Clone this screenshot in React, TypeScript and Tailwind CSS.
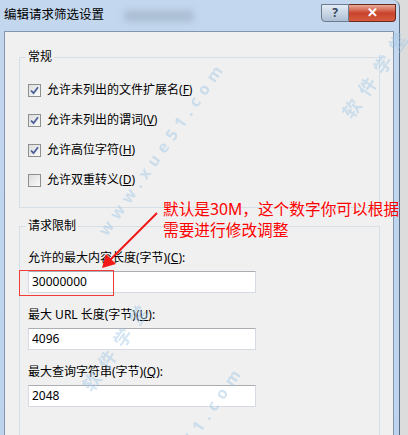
import React from "react";

const cjk = { fontFamily: '"Noto Sans", "Noto Sans CJK SC", sans-serif' };

const Check = ({ on }: { on: boolean }) => (
  <span className="flex h-[13px] w-[13px] items-center justify-center border border-[#8e8f8f] bg-gradient-to-br from-[#dcdcdc] to-[#fbfbfb]">
    {on && (
      <svg width="9" height="9" viewBox="0 0 9 9">
        <path d="M1 4.5 L3.5 7.2 L8 1.2" fill="none" stroke="#4a5f97" strokeWidth="1.8" />
      </svg>
    )}
  </span>
);

const Row = ({ on, text, k }: { on: boolean; text: string; k: string }) => (
  <div className="flex h-[30px] items-center gap-[6px]">
    <Check on={on} />
    <span className="text-[12px] text-black">
      {text}(<span className="underline">{k}</span>)
    </span>
  </div>
);

const Field = ({ label, k, value }: { label: string; k: string; value: string }) => (
  <div className="flex flex-col">
    <span className="h-[16px] text-[12px] leading-[16px] text-black">
      {label}(<span className="underline">{k}</span>):
    </span>
    <div className="mt-[5px] flex h-[22px] w-[228px] items-center border border-[#d6dbe3] border-t-[#abadb3] bg-white pl-[3px] text-[12px] text-black">
      {value}
    </div>
  </div>
);

// faint diagonal site watermark, centred on (x, y)
const Mark = ({ x, y, text, cls }: { x: number; y: number; text: string; cls: string }) => (
  <div className="pointer-events-none absolute" style={{ left: x, top: y }}>
    <div className={`-translate-x-1/2 -translate-y-1/2 -rotate-[55deg] whitespace-nowrap font-bold text-[#9fc6e6] opacity-45 ${cls}`}>
      {text}
    </div>
  </div>
);

export default function App() {
  return (
    <div className="relative h-[435px] w-[408px] overflow-hidden bg-[#dcdcdc]" style={cjk}>
      <div className="flex h-full w-[400px] flex-col rounded-tr-[7px] border-r border-[#5a6b80] bg-gradient-to-b from-[#c3d7ee] to-[#bcd4ee]">
        {/* title bar */}
        <div className="relative flex h-[31px] shrink-0 items-center pl-[4px]">
          <span className="text-[12.5px] text-black">编辑请求筛选设置</span>
          <div className="ml-[20px] h-[12px] w-[70px] rounded bg-[#8a9bb0] opacity-40 blur-[3px]" />
          <div className="absolute right-[3px] top-[4px] flex">
            <div className="flex h-[18px] w-[28px] items-center justify-center rounded-bl-[4px] border border-[#6d7b8e] bg-gradient-to-b from-[#e4ecf5] to-[#aebfd4] text-[12px] font-bold text-[#33465e]">
              ?
            </div>
            <div className="flex h-[18px] w-[47px] items-center justify-center rounded-br-[4px] border border-l-0 border-[#6b2a1f] bg-gradient-to-b from-[#e9a99a] via-[#c8432b] to-[#d55a3e] text-[13px] font-bold text-white">
              ✕
            </div>
          </div>
        </div>

        {/* client area */}
        <div className="ml-[4px] mr-[5px] flex-1 border border-[#8396ae] bg-[#f0f0f0]">
          <div className="relative ml-[14px] mt-[25px] h-[151px] w-[361px] border border-[#d5dfe5] pl-[8px] pt-[17px]">
            <span className="absolute left-[6px] top-[-9px] bg-[#f0f0f0] px-[2px] text-[12px] leading-[16px] text-black">常规</span>
            <Row on text="允许未列出的文件扩展名" k="F" />
            <Row on text="允许未列出的谓词" k="V" />
            <Row on text="允许高位字符" k="H" />
            <Row on={false} text="允许双重转义" k="D" />
          </div>

          <div className="relative ml-[14px] mt-[18px] h-[210px] w-[361px] border border-[#d5dfe5] pl-[8px] pt-[23px]">
            <span className="absolute left-[6px] top-[-9px] bg-[#f0f0f0] px-[2px] text-[12px] leading-[16px] text-black">请求限制</span>
            <div className="flex flex-col gap-[14px]">
              <Field label="允许的最大内容长度(字节)" k="C" value="30000000" />
              <Field label="最大 URL 长度(字节)" k="U" value="4096" />
              <Field label="最大查询字符串(字节)" k="Q" value="2048" />
            </div>
          </div>
        </div>
      </div>

      <Mark x={162} y={148} text="www.xue51.com" cls="text-[16px] tracking-[6px]" />
      <Mark x={378} y={72} text="软件学堂" cls="text-[18px] tracking-[9px]" />
      <Mark x={118} y={345} text="软件学堂" cls="text-[18px] tracking-[9px]" />
      <Mark x={180} y={452} text="www.xue51.com" cls="text-[16px] tracking-[6px]" />

      {/* annotation */}
      <div className="absolute left-[19px] top-[270px] h-[26px] w-[95px] border-[1.5px] border-[#f23b3b]" />
      <svg className="absolute left-0 top-0" width="408" height="435">
        <line x1="157" y1="213" x2="108" y2="262" stroke="#f21818" strokeWidth="2" />
        <polygon points="102,268 106,254 116,264" fill="#f21818" />
      </svg>
      <div className="absolute left-[163px] top-[199px] whitespace-nowrap text-[15.7px] leading-[21px] text-[#ff0000]">
        默认是30M，这个数字你可以根据
        <br />
        需要进行修改调整
      </div>
    </div>
  );
}
